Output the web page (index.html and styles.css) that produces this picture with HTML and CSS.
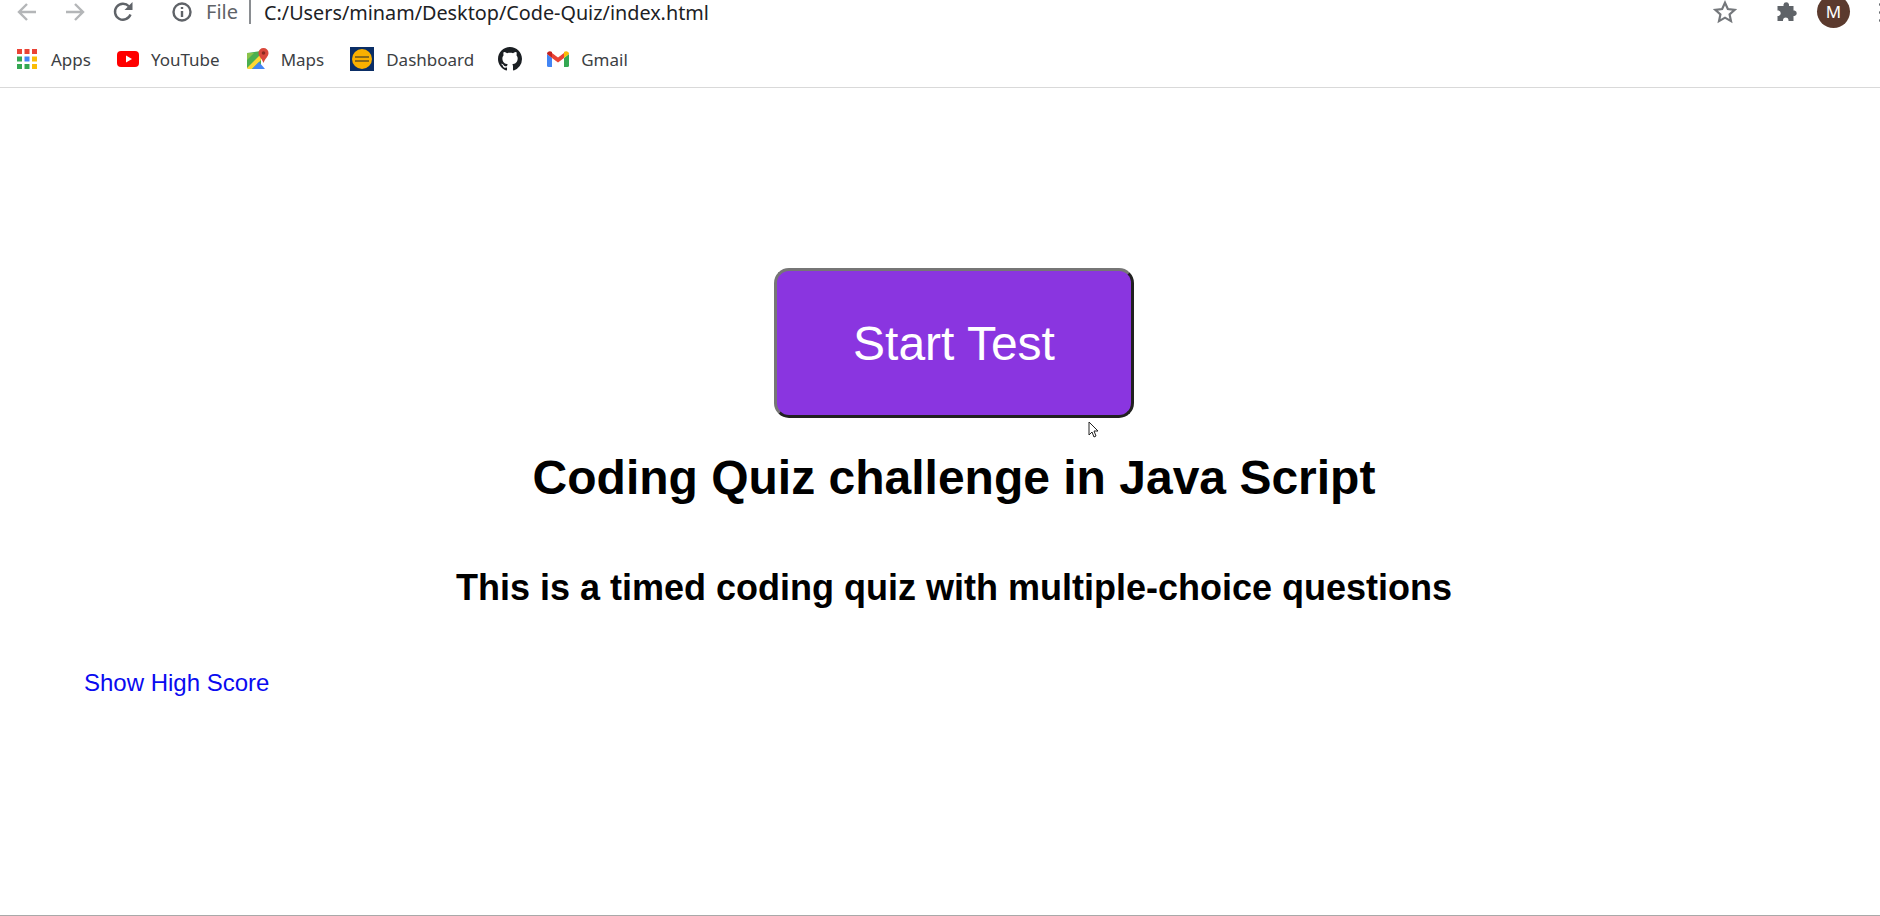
FILE: index.html
```html
<!DOCTYPE html>
<html lang="en">

<head>
    <meta charset="UTF-8">
    <meta name="viewport" content="width=device-width, initial-scale=1.0">
    <title>Code Quiz</title>

    <link rel="stylesheet" href="styles.css">
</head>

<body>
    <header class="chrome">
        <div class="toolbar">
            <svg class="tool-icon back" viewBox="0 0 20 20"><path d="M19 10H3M10 2l-8 8 8 8" /></svg>
            <svg class="tool-icon forward" viewBox="0 0 20 20"><path d="M1 10h16M10 2l8 8-8 8" /></svg>
            <svg class="tool-icon reload" viewBox="0 0 22 22"><path d="M18.500 13.500a8 8 0 1 1-1.600-8.200" /><path class="solid" d="M20.500 1v8h-8z" /></svg>
            <svg class="tool-icon info" viewBox="0 0 20 20"><circle cx="10" cy="10" r="8.500" /><path d="M10 9v6" /><path d="M10 5v2" /></svg>
            <span class="file-label">File</span>
            <span class="url">C:/Users/minam/Desktop/Code-Quiz/index.html</span>
            <div class="toolbar-right">
                <svg class="star" viewBox="0 0 22 22"><path d="M11 2.500l2.600 5.800 6.300.7-4.700 4.200 1.300 6.200-5.500-3.200-5.500 3.200 1.300-6.200L2.100 9l6.300-.7z" /></svg>
                <svg class="puzzle" viewBox="0 0 22 22"><path d="M8.500 4.500a2.800 2.800 0 0 1 5.500 0V6h4.500v4.500h1a2.800 2.800 0 0 1 0 5.500h-1v5h-5v-1.200a2.800 2.800 0 0 0-5.500 0v1.200H2.500v-5h1a2.800 2.800 0 0 0 0-5.500h-1V6h6z" /></svg>
                <span class="avatar">M</span>
                <span class="dots"><i></i><i></i><i></i></span>
            </div>
        </div>
        <nav class="bookmarks">
            <a class="bookmark apps">
                <svg viewBox="0 0 20 20">
                    <rect x="0" y="0" width="5" height="5" fill="#ea4335" /><rect x="7.500" y="0" width="5" height="5" fill="#ea4335" /><rect x="15" y="0" width="5" height="5" fill="#ea4335" />
                    <rect x="0" y="7.500" width="5" height="5" fill="#34a853" /><rect x="7.500" y="7.500" width="5" height="5" fill="#4285f4" /><rect x="15" y="7.500" width="5" height="5" fill="#fbbc05" />
                    <rect x="0" y="15" width="5" height="5" fill="#34a853" /><rect x="7.500" y="15" width="5" height="5" fill="#34a853" /><rect x="15" y="15" width="5" height="5" fill="#fbbc05" />
                </svg>
                Apps
            </a>
            <a class="bookmark youtube">
                <svg viewBox="0 0 22 16"><rect width="22" height="16" rx="4" fill="#f00" /><path d="M9 4.500v7l6-3.500z" fill="#fff" /></svg>
                YouTube
            </a>
            <a class="bookmark maps">
                <svg viewBox="0 0 22 22">
                    <path d="M0 5l14-2v18H2l-2-1z" fill="#4caf50" />
                    <path d="M0 20L14 6v6L5 21H1z" fill="#fdd835" />
                    <path d="M5 21l7-7 6 7z" fill="#4285f4" />
                    <path d="M0 5h7L0 12z" fill="#8bc34a" />
                    <path d="M16.500 0a5 5 0 0 1 5 5c0 3.500-3.500 5.500-5 10-1.500-4.500-5-6.500-5-10a5 5 0 0 1 5-5z" fill="#d9483b" />
                    <circle cx="16.500" cy="5" r="1.800" fill="#8c2a20" />
                </svg>
                Maps
            </a>
            <a class="bookmark dashboard">
                <svg viewBox="0 0 24 24">
                    <rect width="24" height="24" fill="#0b2e66" />
                    <circle cx="12" cy="12" r="10" fill="#f9b000" />
                    <rect x="5" y="9" width="14" height="2" fill="#8a6a18" />
                    <rect x="5" y="13" width="14" height="2" fill="#8a6a18" />
                </svg>
                Dashboard
            </a>
            <a class="bookmark github">
                <svg viewBox="0 0 16 16"><path fill="#1b1f23" d="M8 0C3.580 0 0 3.580 0 8c0 3.540 2.290 6.530 5.470 7.590.4.070.55-.17.55-.38 0-.19-.01-.82-.01-1.490-2.010.37-2.530-.49-2.690-.94-.09-.23-.48-.94-.82-1.130-.28-.15-.68-.52-.01-.53.63-.01 1.080.58 1.230.82.720 1.210 1.870.87 2.330.66.070-.52.280-.87.510-1.070-1.780-.2-3.640-.89-3.640-3.950 0-.87.310-1.590.820-2.150-.08-.2-.36-1.020.08-2.120 0 0 .67-.21 2.200.82.640-.18 1.320-.27 2-.27s1.360.09 2 .27c1.530-1.040 2.200-.82 2.200-.82.440 1.100.16 1.920.08 2.120.51.560.82 1.270.82 2.150 0 3.070-1.870 3.750-3.650 3.950.29.25.54.730.54 1.480 0 1.070-.01 1.930-.01 2.200 0 .210.150.460.550.380A8.010 8.010 0 0 0 16 8c0-4.420-3.580-8-8-8z" /></svg>
            </a>
            <a class="bookmark gmail">
                <svg viewBox="0 0 22 16">
                    <path d="M0 3v11.500A1.500 1.500 0 0 0 1.500 16H5V7z" fill="#4285f4" />
                    <path d="M22 3v11.500a1.500 1.500 0 0 1-1.500 1.500H17V7z" fill="#34a853" />
                    <path d="M5 7V2l6 4.500L17 2v5l-6 4.500z" fill="#ea4335" />
                    <path d="M0 3c0-2.500 3-3.500 5-2v6L0 3z" fill="#c5221f" />
                    <path d="M22 3c0-2.500-3-3.500-5-2v6l5-4z" fill="#fbbc04" />
                </svg>
                Gmail
            </a>
        </nav>
    </header>

    <main class="page">
        <section class="intro">
            <button class="start-btn">Start Test</button>
            <h1>Coding Quiz challenge in Java Script</h1>
            <h2>This is a timed coding quiz with multiple-choice questions</h2>
        </section>
        <a class="high-score" href="#">Show High Score</a>
    </main>

    <svg class="cursor" viewBox="0 0 12 18"><path d="M1 1v13l3-3 2 5 2-1-2-5h4z" /></svg>
</body>

</html>
```

FILE: styles.css
```css
body {
    margin: 0;
    height: 916px;
    overflow: hidden;
    background-color: #fff;
    border-bottom: 1px solid #a9a9a9;
    box-sizing: border-box;
    font-family: 'Liberation Sans', Arial, sans-serif;
    position: relative;
}

.chrome {
    height: 88px;
    box-sizing: border-box;
    border-bottom: 1px solid #d9d9d9;
    font-family: 'Noto Sans', sans-serif;
}

.toolbar {
    display: flex;
    align-items: center;
    height: 24px;
    padding-left: 17px;
}

.tool-icon {
    fill: none;
    stroke: #5f6368;
    stroke-width: 2.400;
    flex: none;
}

.tool-icon .solid {
    fill: #5f6368;
    stroke: none;
}

.back,
.forward {
    width: 20px;
    height: 20px;
    stroke: #b4b6b8;
}

.forward {
    margin-left: 28px;
}

.reload {
    width: 22px;
    height: 22px;
    margin-left: 27px;
}

.info {
    width: 20px;
    height: 20px;
    margin-left: 38px;
}

.file-label {
    margin-left: 14px;
    padding-right: 11px;
    border-right: 2px solid #8a8d91;
    font-size: 20px;
    line-height: 24px;
    color: #5f6368;
}

.url {
    margin-left: 13px;
    font-size: 19.800px;
    color: #202124;
}

.toolbar-right {
    display: flex;
    align-items: center;
    margin-left: auto;
}

.star {
    width: 24px;
    height: 24px;
    fill: none;
    stroke: #75787c;
    stroke-width: 2;
}

.puzzle {
    width: 22px;
    height: 22px;
    margin-left: 38px;
    margin-top: -2px;
    fill: #5f6368;
}

.avatar {
    display: flex;
    align-items: center;
    justify-content: center;
    flex: none;
    width: 33px;
    height: 33px;
    margin-left: 20px;
    margin-top: -2px;
    border-radius: 50%;
    background-color: #5b3a2e;
    color: #fff;
    font-size: 17px;
}

.dots {
    display: flex;
    flex-direction: column;
    gap: 5px;
    margin-left: 29px;
    margin-right: -2px;
}

.dots i {
    display: block;
    width: 3px;
    height: 3px;
    border-radius: 50%;
    background-color: #5f6368;
}

.bookmarks {
    display: flex;
    align-items: center;
    height: 24px;
    margin-top: 23px;
    padding-left: 17px;
}

.bookmark {
    display: flex;
    align-items: center;
    font-size: 17px;
    color: #3c4043;
}

.bookmark svg {
    flex: none;
}

.apps svg {
    width: 20px;
    height: 20px;
    margin-right: 14px;
}

.youtube {
    margin-left: 26px;
}

.youtube svg {
    width: 22px;
    height: 16px;
    margin-right: 12px;
}

.maps {
    margin-left: 27px;
}

.maps svg {
    width: 22px;
    height: 22px;
    margin-right: 12px;
}

.dashboard {
    margin-left: 26px;
}

.dashboard svg {
    width: 24px;
    height: 24px;
    margin-right: 12px;
}

.github {
    margin-left: 24px;
}

.github svg {
    width: 24px;
    height: 24px;
}

.gmail {
    margin-left: 25px;
}

.gmail svg {
    width: 22px;
    height: 16px;
    margin-right: 12px;
}

.page {
    padding: 180px 56px 0 84px;
}

.intro {
    text-align: center;
}

.start-btn {
    display: block;
    width: 360px;
    height: 150px;
    margin: 0 auto;
    border: 3px solid;
    border-color: #767676 #212121 #212121 #767676;
    border-radius: 15px;
    background-color: #8a35e0;
    color: #fff;
    font-family: inherit;
    font-size: 48px;
}

h1 {
    margin: 32px 0 0;
    font-size: 48px;
    line-height: 55px;
}

h2 {
    margin: 62px 0 0;
    font-size: 36px;
    line-height: 41px;
}

.high-score {
    display: block;
    margin-top: 61px;
    font-size: 24px;
    line-height: 28px;
    color: #0a0af0;
    text-decoration: none;
}

.cursor {
    position: absolute;
    left: 1088px;
    top: 421px;
    width: 12px;
    height: 18px;
    fill: #fff;
    stroke: #222;
    stroke-width: 1;
}
```
